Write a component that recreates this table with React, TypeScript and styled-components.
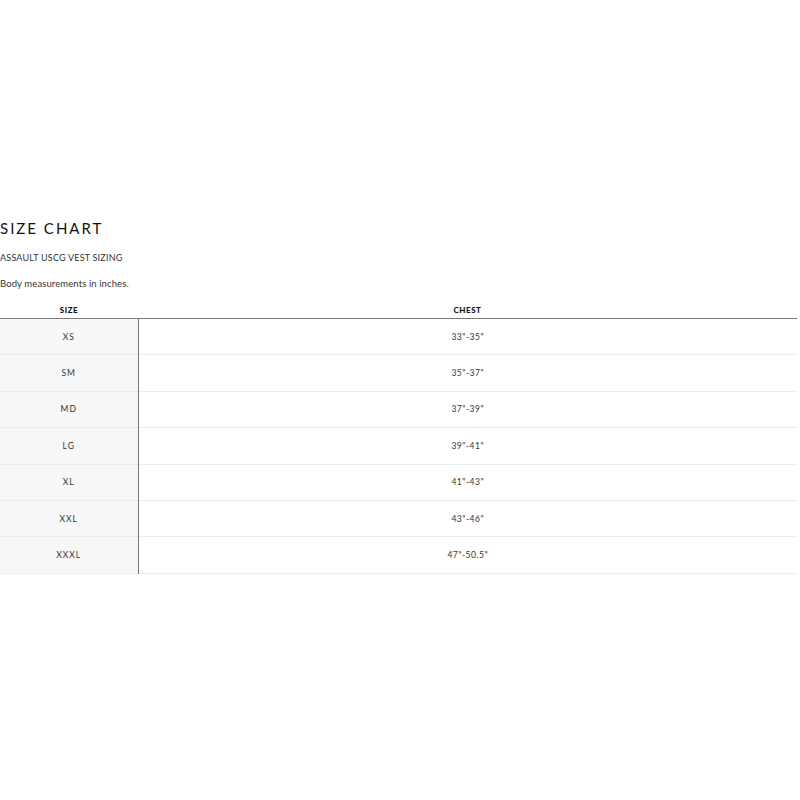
import React from "react";
import styled, { createGlobalStyle } from "styled-components";

const Global = createGlobalStyle`
  html, body { margin: 0; padding: 0; background: #fff; }
  body { font-family: Lato, "Open Sans", sans-serif; color: #222; }
`;

const Page = styled.div`
  width: 797px;
  padding-top: 218px;
`;

const Title = styled.h1`
  margin: 0;
  font-size: 15px;
  font-weight: 400;
  letter-spacing: 2px;
  line-height: 20px;
  color: #111;
`;

const Subtitle = styled.p`
  margin: 13px 0 0;
  font-size: 9px;
  letter-spacing: 0.2px;
  line-height: 14px;
  color: #333;
`;

const Note = styled.p`
  margin: 12px 0 0;
  font-size: 9.5px;
  letter-spacing: 0.1px;
  line-height: 14px;
  color: #333;
`;

const Table = styled.table`
  margin-top: 5px;
  width: 797px;
  border-collapse: collapse;
  table-layout: fixed;
`;

const Th = styled.th<{ $w?: number }>`
  width: ${(p) => (p.$w ? `${p.$w}px` : "auto")};
  font-size: 8px;
  font-weight: 900;
  letter-spacing: 0.5px;
  line-height: 10px;
  color: #111;
  height: 19px;
  padding: 0 0 3px;
  text-align: center;
  vertical-align: bottom;
  border-bottom: 1px solid #777;
`;

const Row = styled.tr`
  height: 36.4px;
  border-bottom: 1px solid #ececec;
`;

const SizeCell = styled.td`
  background: #f7f7f7;
  border-right: 1px solid #777;
  text-align: center;
  font-size: 8.5px;
  letter-spacing: 1px;
  color: #333;
  padding: 0;
`;

const ValueCell = styled.td`
  text-align: center;
  font-size: 8.5px;
  letter-spacing: 0.5px;
  color: #333;
  padding: 0;
`;

const rows: [string, string][] = [
  ["XS", "33\"-35\""],
  ["SM", "35\"-37\""],
  ["MD", "37\"-39\""],
  ["LG", "39\"-41\""],
  ["XL", "41\"-43\""],
  ["XXL", "43\"-46\""],
  ["XXXL", "47\"-50.5\""],
];

export default function App() {
  return (
    <>
      <Global />
      <Page>
        <Title>SIZE CHART</Title>
        <Subtitle>ASSAULT USCG VEST SIZING</Subtitle>
        <Note>Body measurements in inches.</Note>
        <Table>
          <thead>
            <tr>
              <Th $w={138}>SIZE</Th>
              <Th>CHEST</Th>
            </tr>
          </thead>
          <tbody>
            {rows.map(([s, c]) => (
              <Row key={s}>
                <SizeCell>{s}</SizeCell>
                <ValueCell>{c}</ValueCell>
              </Row>
            ))}
          </tbody>
        </Table>
      </Page>
    </>
  );
}
